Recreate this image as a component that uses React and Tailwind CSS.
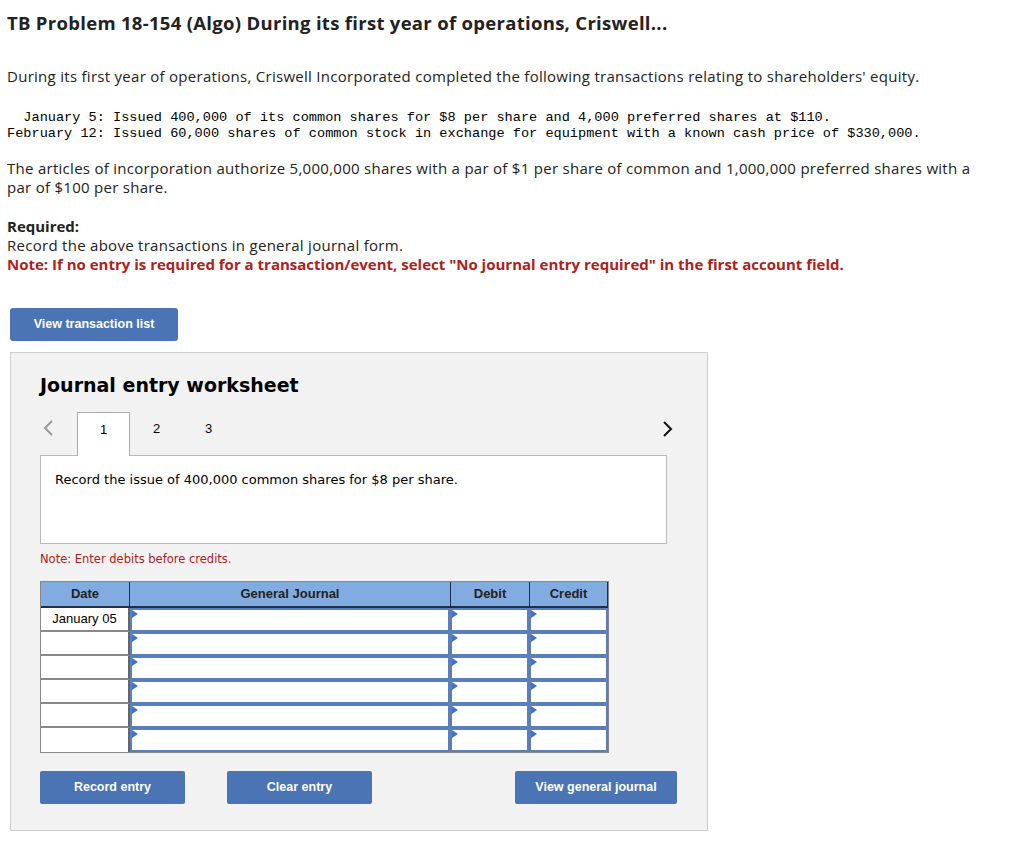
import React from "react";

const sans = { fontFamily: "'Open Sans', Lato, sans-serif" };

function Cell({ w }) {
  return (
    <div className={`relative h-[24px] bg-white border-2 border-[#5a7fb9] ${w}`}>
      <svg className="absolute left-0 top-0" width="6" height="8" viewBox="0 0 6 8">
        <polygon points="0,0 6,4 0,8" fill="#3f74c4" />
      </svg>
    </div>
  );
}

export default function App() {
  const rows = ["January 05", "", "", "", "", ""];
  return (
    <div className="w-[1024px] min-h-[856px] bg-white text-[#222]" style={sans}>
      <div className="px-[7px] pt-[12px]">
        <h1 className="text-[18.5px] font-bold leading-[22px] tracking-[0.3px]">
          TB Problem 18-154 (Algo) During its first year of operations, Criswell...
        </h1>
        <p className="mt-[33px] text-[15px] leading-[19px] tracking-[0.28px]">
          During its first year of operations, Criswell Incorporated completed the following transactions relating to shareholders' equity.
        </p>
        <pre
          className="mt-[24px] text-[13.6px] leading-[15.5px] text-black"
          style={{ fontFamily: "'Liberation Mono', monospace" }}
        >{`  January 5: Issued 400,000 of its common shares for $8 per share and 4,000 preferred shares at $110.
February 12: Issued 60,000 shares of common stock in exchange for equipment with a known cash price of $330,000.`}</pre>
        <p className="mt-[18px] max-w-[990px] text-[15px] leading-[19px] tracking-[0.28px]">
          The articles of incorporation authorize 5,000,000 shares with a par of $1 per share of common and 1,000,000 preferred shares with a par of $100 per share.
        </p>
        <p className="mt-[20px] text-[15px] leading-[19px] font-bold">Required:</p>
        <p className="text-[15px] leading-[19px] tracking-[0.28px]">Record the above transactions in general journal form.</p>
        <p className="text-[15px] leading-[19px] font-bold text-[#b0201c]">
          Note: If no entry is required for a transaction/event, select "No journal entry required" in the first account field.
        </p>
      </div>

      <div className="px-[10px]" style={{ fontFamily: "'Liberation Sans', Arial, sans-serif" }}>
        <button className="mt-[34px] w-[168px] h-[33px] rounded-[3px] bg-[#4a74b4] text-white text-[12.5px] font-bold">
          View transaction list
        </button>

        <div className="mt-[11px] w-[698px] h-[479px] bg-[#f2f2f2] border border-[#cccccc] pl-[29px] pt-[20px]">
          <h2 className="text-[19px] font-bold leading-[24px] text-black" style={{ fontFamily: "'DejaVu Sans', Verdana, sans-serif" }}>
            Journal entry worksheet
          </h2>

          <div className="mt-[16px] w-[627px] flex items-end h-[43px] relative">
            <svg className="absolute left-[3px] top-[7px]" width="12" height="16" viewBox="0 0 12 16">
              <polyline points="9,1 2,8 9,15" fill="none" stroke="#999" strokeWidth="2" />
            </svg>
            <div className="ml-[37px] w-[53px] h-[44px] bg-white border border-b-0 border-[#aaa] relative z-10 flex justify-center pt-[7px] text-[13px] text-black">
              1
            </div>
            <div className="w-[53px] h-[44px] flex justify-center pt-[7px] text-[13px] text-black">2</div>
            <div className="w-[53px] h-[44px] flex justify-center pt-[7px] text-[13px] text-black -ml-[1px]">3</div>
            <svg className="absolute right-[-7px] top-[8px]" width="12" height="16" viewBox="0 0 12 16">
              <polyline points="2,1 9,8 2,15" fill="none" stroke="#111" strokeWidth="2" />
            </svg>
          </div>

          <div className="-mt-px w-[627px] h-[89px] bg-white border border-[#bbb] px-[14px] pt-[14px] text-[13px] text-black" style={{ fontFamily: "'DejaVu Sans', Verdana, sans-serif" }}>
            Record the issue of 400,000 common shares for $8 per share.
          </div>

          <p className="mt-[8px] text-[11.5px] text-[#b0201c] leading-[14px]" style={{ fontFamily: "'DejaVu Sans', Verdana, sans-serif" }}>
            Note: Enter debits before credits.
          </p>

          <div className="mt-[15px] w-[569px] border border-[#888] bg-white">
            <div className="flex h-[26px] bg-[#82abe0] text-[13px] font-bold text-[#222] border-b-2 border-[#1f2f46]">
              <div className="w-[89px] flex items-center justify-center border-r border-[#1f2f46]">Date</div>
              <div className="w-[321px] flex items-center justify-center border-r border-[#1f2f46]">General Journal</div>
              <div className="w-[79px] flex items-center justify-center border-r border-[#1f2f46]">Debit</div>
              <div className="flex-1 flex items-center justify-center border-r border-[#1f2f46]">Credit</div>
            </div>
            {rows.map((d, i) => (
              <div key={i} className="flex">
                <div className={`w-[89px] h-[24px] flex items-center justify-center text-[13px] text-black border-r-2 border-[#666] ${i < rows.length - 1 ? "border-b-2 border-b-[#888]" : ""}`}>
                  {d}
                </div>
                <Cell w="w-[320px]" />
                <Cell w="w-[79px]" />
                <Cell w="flex-1" />
              </div>
            ))}
          </div>

          <div className="mt-[18px] w-[637px] flex items-center">
            <button className="w-[145px] h-[33px] rounded-[2px] bg-[#4a74b4] text-white text-[12.5px] font-bold">Record entry</button>
            <button className="ml-[42px] w-[145px] h-[33px] rounded-[2px] bg-[#4a74b4] text-white text-[12.5px] font-bold">Clear entry</button>
            <button className="ml-auto w-[162px] h-[33px] rounded-[2px] bg-[#4a74b4] text-white text-[12.5px] font-bold">View general journal</button>
          </div>
        </div>
      </div>
    </div>
  );
}
